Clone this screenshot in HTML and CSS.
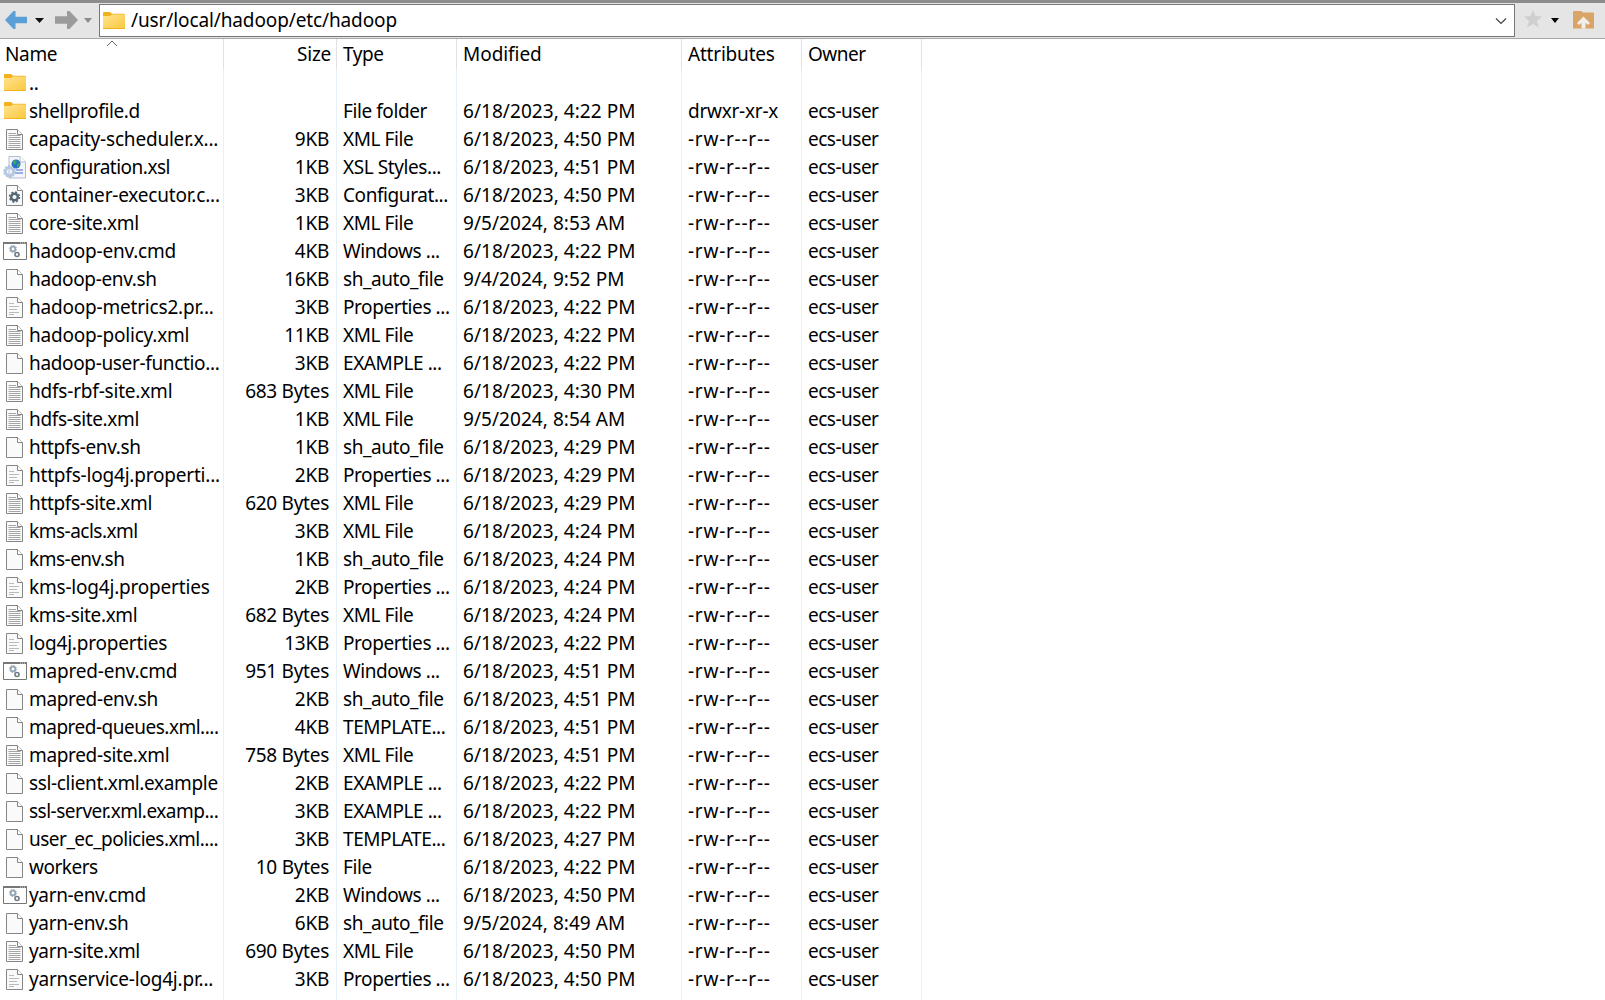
FILE: index.html
```html
<!DOCTYPE html>
<html lang="en">
<head>
<meta charset="utf-8">
<title>/usr/local/hadoop/etc/hadoop</title>
<link rel="stylesheet" href="styles.css">
</head>
<body>
<svg class="sprite" aria-hidden="true">
  <defs>
    <linearGradient id="gold" x1="0" y1="0" x2="1" y2="1"><stop offset="0" stop-color="#ffe391"/><stop offset="1" stop-color="#fbc93f"/></linearGradient>
    <g id="page"><path d="M.5 .5H11.5L16.5 5.5V20.5H.5Z" fill="#fafafa" stroke="#858585"/><path d="M11.5 .5V5.5H16.5" fill="#fff" stroke="#858585"/></g>
    <symbol id="folder" viewBox="0 0 22 17"><path d="M0 1Q0 0 1 0H7L9 1.7H21Q22 1.7 22 3V17H0Z" fill="#f1b21e"/><path d="M0 4H7L9 2.6H22V16H0Z" fill="url(#gold)"/></symbol>
    <symbol id="blank" viewBox="0 0 17 21"><use href="#page"/></symbol>
    <symbol id="xml" viewBox="0 0 17 21"><use href="#page"/><path d="M2.500 4.500H10M2.500 6.500H14.500M2.500 8.500H14.500M2.500 10.500H14.500M2.500 12.500H14.500M2.500 14.500H14.500M2.500 16.500H14.500M2.500 18.500H14.500" stroke="#a6a6a6"/></symbol>
    <symbol id="prop" viewBox="0 0 17 21"><use href="#page"/><path d="M3 6.500H8M3 9.500H13M3 12.500H11M3 15.500H13M3 17.500H8" stroke="#bbb"/></symbol>
    <symbol id="conf" viewBox="0 0 17 21"><use href="#page"/><circle cx="8.500" cy="12" r="3.300" fill="none" stroke="#536774" stroke-width="2.400"/><circle cx="8.500" cy="12" r="4.900" fill="none" stroke="#536774" stroke-width="1.600" stroke-dasharray="2 1.850"/></symbol>
    <symbol id="cmd" viewBox="0 0 24 18"><path d="M.5 .5H23.500V17.500H.5Z" fill="#fff" stroke="#777"/><path d="M0 1H24" stroke="#777" stroke-width="2"/><path d="M17 1H22" stroke="#ddd" stroke-dasharray="1 1"/><circle cx="10" cy="7" r="2.300" fill="none" stroke="#96a5b0" stroke-width="1.800"/><circle cx="10" cy="7" r="3.600" fill="none" stroke="#96a5b0" stroke-dasharray="1.400 1.400"/><circle cx="14" cy="12.500" r="2" fill="none" stroke="#6d7b85" stroke-width="1.600"/></symbol>
    <symbol id="xsl" viewBox="0 0 24 23"><path d="M6 .5H17L22.500 6V22H6Z" fill="#f3f5fb" stroke="#b9bdcb"/><path d="M17 .5V6H22.500" fill="#fff" stroke="#b9bdcb"/><path d="M13 14H20M12 17H20" stroke="#7f9ae0" stroke-width="1.400"/><circle cx="13" cy="8" r="4.500" fill="#2b6fc9"/><path d="M10 5Q13 3 14 6L11 9ZM14 8L17 7Q17 11 14 12Z" fill="#36ae55"/><circle cx="6.500" cy="15.500" r="4" fill="none" stroke="#b7c9e2" stroke-width="3"/><circle cx="6.500" cy="15.500" r="5.800" fill="none" stroke="#9db3d2" stroke-dasharray="2 1.600"/></symbol>
  </defs>
</svg>
<header class="toolbar">
  <svg class="nav" width="98" height="28" viewBox="0 0 98 28"><path d="M5 14L13.500 5H15.500V10.700H27V17.300H15.500V23H13.500Z" fill="#5b9fd6"/><path d="M35 12H44L39.500 17Z" fill="#111"/><path d="M78 14L69.500 5H67V10.200H55V17.800H67V23H69.500Z" fill="#9b9b9b"/><path d="M84 12H92L88 17Z" fill="#8d8d8d"/></svg>
  <div class="address"><svg class="folder"><use href="#folder"/></svg><span class="path">/usr/local/hadoop/etc/hadoop</span><svg class="chevron" width="12" height="8" viewBox="0 0 12 8"><path d="M1 1.500L6 6.500L11 1.500" fill="none" stroke="#444" stroke-width="1.200"/></svg></div>
  <svg class="tools" width="90" height="28" viewBox="0 0 90 28"><path d="M18 4L20.500 10L27 10.500L22 15L24 21.500L18 18L12 21.500L14 15L9 10.500L15.500 10Z" fill="#cfcfcf"/><path d="M36 12H44L40 17Z" fill="#000"/><path d="M58 6Q58 5 59 5H66L68 6.500H78Q79 6.500 79 7.500V22.500H58Z" fill="#d9a566"/><path d="M68.500 10.500L75 17L73 19L70.500 16.800V22.500H66.500V16.800L64 19L62 17Z" fill="#f1efec"/></svg>
</header>
<main class="list">
<svg class="sort" width="12" height="7" viewBox="0 0 12 7"><path d="M1 6L6 1L11 6" fill="none" stroke="#666"/></svg>
<div class="row head"><b>Name</b><b>Size</b><b>Type</b><b>Modified</b><b>Attributes</b><b>Owner</b></div>
<div class="row"><b><svg class="folder"><use href="#folder"/></svg>..</b><b></b><b></b><b></b><b></b><b></b></div>
<div class="row dir"><b><svg class="folder"><use href="#folder"/></svg>shellprofile.d</b><b></b><b>File folder</b><b>6/18/2023, 4:22 PM</b><b>drwxr-xr-x</b><b>ecs-user</b></div>
<div class="row wide"><b><svg class="doc"><use href="#xml"/></svg>capacity-scheduler.x...</b><b>9KB</b><b>XML File</b><b>6/18/2023, 4:50 PM</b><b>-rw-r--r--</b><b>ecs-user</b></div>
<div class="row tight"><b><svg class="xsl"><use href="#xsl"/></svg>configuration.xsl</b><b>1KB</b><b>XSL Styles...</b><b>6/18/2023, 4:51 PM</b><b>-rw-r--r--</b><b>ecs-user</b></div>
<div class="row wide"><b><svg class="doc"><use href="#conf"/></svg>container-executor.c...</b><b>3KB</b><b>Configurat...</b><b>6/18/2023, 4:50 PM</b><b>-rw-r--r--</b><b>ecs-user</b></div>
<div class="row"><b><svg class="doc"><use href="#xml"/></svg>core-site.xml</b><b>1KB</b><b>XML File</b><b>9/5/2024, 8:53 AM</b><b>-rw-r--r--</b><b>ecs-user</b></div>
<div class="row wide"><b><svg class="cmd"><use href="#cmd"/></svg>hadoop-env.cmd</b><b>4KB</b><b>Windows ...</b><b>6/18/2023, 4:22 PM</b><b>-rw-r--r--</b><b>ecs-user</b></div>
<div class="row"><b><svg class="doc"><use href="#blank"/></svg>hadoop-env.sh</b><b>16KB</b><b>sh_auto_file</b><b>9/4/2024, 9:52 PM</b><b>-rw-r--r--</b><b>ecs-user</b></div>
<div class="row wide"><b><svg class="doc"><use href="#prop"/></svg>hadoop-metrics2.pr...</b><b>3KB</b><b>Properties ...</b><b>6/18/2023, 4:22 PM</b><b>-rw-r--r--</b><b>ecs-user</b></div>
<div class="row wide"><b><svg class="doc"><use href="#xml"/></svg>hadoop-policy.xml</b><b>11KB</b><b>XML File</b><b>6/18/2023, 4:22 PM</b><b>-rw-r--r--</b><b>ecs-user</b></div>
<div class="row"><b><svg class="doc"><use href="#blank"/></svg>hadoop-user-functio...</b><b>3KB</b><b>EXAMPLE ...</b><b>6/18/2023, 4:22 PM</b><b>-rw-r--r--</b><b>ecs-user</b></div>
<div class="row wide"><b><svg class="doc"><use href="#xml"/></svg>hdfs-rbf-site.xml</b><b>683 Bytes</b><b>XML File</b><b>6/18/2023, 4:30 PM</b><b>-rw-r--r--</b><b>ecs-user</b></div>
<div class="row"><b><svg class="doc"><use href="#xml"/></svg>hdfs-site.xml</b><b>1KB</b><b>XML File</b><b>9/5/2024, 8:54 AM</b><b>-rw-r--r--</b><b>ecs-user</b></div>
<div class="row"><b><svg class="doc"><use href="#blank"/></svg>httpfs-env.sh</b><b>1KB</b><b>sh_auto_file</b><b>6/18/2023, 4:29 PM</b><b>-rw-r--r--</b><b>ecs-user</b></div>
<div class="row wide"><b><svg class="doc"><use href="#prop"/></svg>httpfs-log4j.properti...</b><b>2KB</b><b>Properties ...</b><b>6/18/2023, 4:29 PM</b><b>-rw-r--r--</b><b>ecs-user</b></div>
<div class="row"><b><svg class="doc"><use href="#xml"/></svg>httpfs-site.xml</b><b>620 Bytes</b><b>XML File</b><b>6/18/2023, 4:29 PM</b><b>-rw-r--r--</b><b>ecs-user</b></div>
<div class="row tight"><b><svg class="doc"><use href="#xml"/></svg>kms-acls.xml</b><b>3KB</b><b>XML File</b><b>6/18/2023, 4:24 PM</b><b>-rw-r--r--</b><b>ecs-user</b></div>
<div class="row tight"><b><svg class="doc"><use href="#blank"/></svg>kms-env.sh</b><b>1KB</b><b>sh_auto_file</b><b>6/18/2023, 4:24 PM</b><b>-rw-r--r--</b><b>ecs-user</b></div>
<div class="row wide"><b><svg class="doc"><use href="#prop"/></svg>kms-log4j.properties</b><b>2KB</b><b>Properties ...</b><b>6/18/2023, 4:24 PM</b><b>-rw-r--r--</b><b>ecs-user</b></div>
<div class="row"><b><svg class="doc"><use href="#xml"/></svg>kms-site.xml</b><b>682 Bytes</b><b>XML File</b><b>6/18/2023, 4:24 PM</b><b>-rw-r--r--</b><b>ecs-user</b></div>
<div class="row wide"><b><svg class="doc"><use href="#prop"/></svg>log4j.properties</b><b>13KB</b><b>Properties ...</b><b>6/18/2023, 4:22 PM</b><b>-rw-r--r--</b><b>ecs-user</b></div>
<div class="row wide"><b><svg class="cmd"><use href="#cmd"/></svg>mapred-env.cmd</b><b>951 Bytes</b><b>Windows ...</b><b>6/18/2023, 4:51 PM</b><b>-rw-r--r--</b><b>ecs-user</b></div>
<div class="row"><b><svg class="doc"><use href="#blank"/></svg>mapred-env.sh</b><b>2KB</b><b>sh_auto_file</b><b>6/18/2023, 4:51 PM</b><b>-rw-r--r--</b><b>ecs-user</b></div>
<div class="row tight"><b><svg class="doc"><use href="#blank"/></svg>mapred-queues.xml....</b><b>4KB</b><b>TEMPLATE...</b><b>6/18/2023, 4:51 PM</b><b>-rw-r--r--</b><b>ecs-user</b></div>
<div class="row"><b><svg class="doc"><use href="#xml"/></svg>mapred-site.xml</b><b>758 Bytes</b><b>XML File</b><b>6/18/2023, 4:51 PM</b><b>-rw-r--r--</b><b>ecs-user</b></div>
<div class="row"><b><svg class="doc"><use href="#blank"/></svg>ssl-client.xml.example</b><b>2KB</b><b>EXAMPLE ...</b><b>6/18/2023, 4:22 PM</b><b>-rw-r--r--</b><b>ecs-user</b></div>
<div class="row tight"><b><svg class="doc"><use href="#blank"/></svg>ssl-server.xml.examp...</b><b>3KB</b><b>EXAMPLE ...</b><b>6/18/2023, 4:22 PM</b><b>-rw-r--r--</b><b>ecs-user</b></div>
<div class="row tight"><b><svg class="doc"><use href="#blank"/></svg>user_ec_policies.xml....</b><b>3KB</b><b>TEMPLATE...</b><b>6/18/2023, 4:27 PM</b><b>-rw-r--r--</b><b>ecs-user</b></div>
<div class="row tight"><b><svg class="doc"><use href="#blank"/></svg>workers</b><b>10 Bytes</b><b>File</b><b>6/18/2023, 4:22 PM</b><b>-rw-r--r--</b><b>ecs-user</b></div>
<div class="row"><b><svg class="cmd"><use href="#cmd"/></svg>yarn-env.cmd</b><b>2KB</b><b>Windows ...</b><b>6/18/2023, 4:50 PM</b><b>-rw-r--r--</b><b>ecs-user</b></div>
<div class="row"><b><svg class="doc"><use href="#blank"/></svg>yarn-env.sh</b><b>6KB</b><b>sh_auto_file</b><b>9/5/2024, 8:49 AM</b><b>-rw-r--r--</b><b>ecs-user</b></div>
<div class="row"><b><svg class="doc"><use href="#xml"/></svg>yarn-site.xml</b><b>690 Bytes</b><b>XML File</b><b>6/18/2023, 4:50 PM</b><b>-rw-r--r--</b><b>ecs-user</b></div>
<div class="row wide"><b><svg class="doc"><use href="#prop"/></svg>yarnservice-log4j.pr...</b><b>3KB</b><b>Properties ...</b><b>6/18/2023, 4:50 PM</b><b>-rw-r--r--</b><b>ecs-user</b></div>
<div class="row tail"><b></b><b></b><b></b><b></b><b></b><b></b></div>
</main>
</body>
</html>
```
FILE: styles.css
```css
* { box-sizing: border-box; }
body { margin: 0; height: 1000px; overflow: hidden; background: #fff; color: #000; font: 19px/28px "Noto Sans", "Open Sans", sans-serif; letter-spacing: -0.5px; }
.sprite { position: absolute; width: 0; height: 0; }
.toolbar { display: flex; height: 39px; border-top: 3px solid #8c8c8c; border-bottom: 1px solid #a8a8a8; background: #e5e5e5; padding-top: 1px; }
.nav { margin: 2px 1px 0 0; flex: none; }
.address { display: flex; align-items: center; width: 1416px; height: 33px; border: 1px solid #777; background: #fff; padding: 0 7px 0 3px; }
.address .folder { margin-top: -1px; }
.path { flex: 1; margin: -2px 0 0 6px; letter-spacing: -0.12px; }
.tools { margin-top: 2px; flex: none; }
.list { position: relative; }
.sort { position: absolute; left: 106px; top: 1px; }
.row { display: grid; grid-template-columns: 224px 113px 120px 225px 120px 120px; height: 28px; }
.row b { display: flex; align-items: center; font-weight: 400; white-space: nowrap; border-right: 1px solid #e6f0f9; padding-left: 6px; }
.row b:nth-child(1) { padding-left: 4px; letter-spacing: -0.35px; }
.row b:nth-child(2) { justify-content: flex-end; padding-right: 7px; letter-spacing: -0.27px; }
.row b:nth-child(3) { letter-spacing: -0.42px; }
.row b:nth-child(4) { letter-spacing: 0.05px; }
.row b:nth-child(5) { letter-spacing: 0.75px; }
.wide b:nth-child(1) { letter-spacing: -0.2px; }
.tight b:nth-child(1) { letter-spacing: -0.5px; }
.dir b:nth-child(5) { letter-spacing: -0.25px; }
.head { height: 30px; }
.head b { border-color: #e2e2e2; padding-bottom: 1px; }
.head b:nth-child(1) { padding-left: 5px; }
.head b:nth-child(2) { padding-right: 5px; }
.head b:nth-child(4) { letter-spacing: -0.05px; }
.head b:nth-child(5) { letter-spacing: -0.2px; }
.tail { height: 20px; }
.folder { width: 22px; height: 17px; flex: none; }
.row .folder { margin: -2px 3px 0 0; }
.doc { width: 17px; height: 21px; margin: 0 6px 0 2px; flex: none; }
.cmd { width: 24px; height: 18px; margin: 0 2px 0 -1px; flex: none; }
.xsl { width: 24px; height: 23px; margin: 0 2px 0 -1px; flex: none; }
```
